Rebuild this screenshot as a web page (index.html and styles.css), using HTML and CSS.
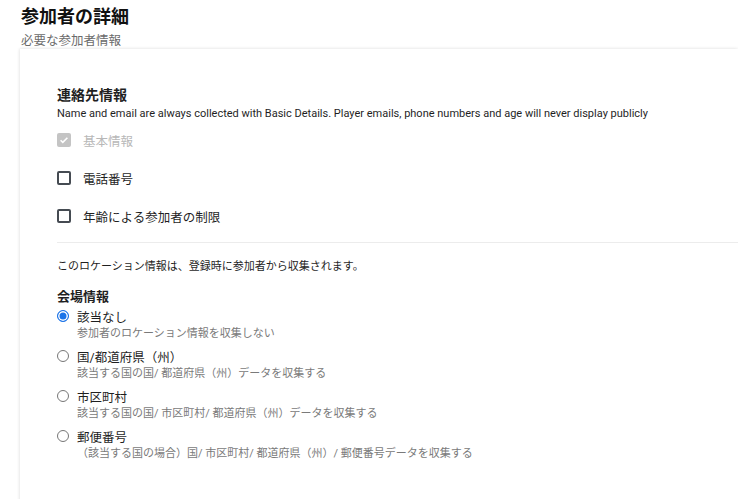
FILE: index.html
```html
<!DOCTYPE html>
<html lang="ja">
  <head>
    <meta charset="UTF-8" />
    <meta name="viewport" content="width=device-width, initial-scale=1.0" />
    <title>参加者の詳細</title>
    <link rel="stylesheet" href="styles.css">
  </head>
  <body>
    <div class="page-header">
      <h1 class="page-title">参加者の詳細</h1>
      <p class="page-subtitle">必要な参加者情報</p>
    </div>

    <div class="card">
      <section class="contact-section">
        <h2 class="section-title">連絡先情報</h2>
        <p class="section-desc">Name and email are always collected with Basic Details. Player emails, phone numbers and age will never display publicly</p>

        <div class="check-list">
          <label class="check-row disabled">
            <input type="checkbox" checked disabled />
            <span>基本情報</span>
          </label>
          <label class="check-row">
            <input type="checkbox" />
            <span>電話番号</span>
          </label>
          <label class="check-row">
            <input type="checkbox" />
            <span>年齢による参加者の制限</span>
          </label>
        </div>
      </section>

      <hr class="divider" />

      <section class="location-section">
        <p class="location-note">このロケーション情報は、登録時に参加者から収集されます。</p>
        <h3 class="group-title">会場情報</h3>

        <div class="radio-list">
          <div class="radio-option">
            <label class="radio-row">
              <input type="radio" name="venue" checked />
              <span>該当なし</span>
            </label>
            <div class="radio-hint">参加者のロケーション情報を収集しない</div>
          </div>
          <div class="radio-option">
            <label class="radio-row">
              <input type="radio" name="venue" />
              <span>国/都道府県（州）</span>
            </label>
            <div class="radio-hint">該当する国の国/ 都道府県（州）データを収集する</div>
          </div>
          <div class="radio-option">
            <label class="radio-row">
              <input type="radio" name="venue" />
              <span>市区町村</span>
            </label>
            <div class="radio-hint">該当する国の国/ 市区町村/ 都道府県（州）データを収集する</div>
          </div>
          <div class="radio-option">
            <label class="radio-row">
              <input type="radio" name="venue" />
              <span>郵便番号</span>
            </label>
            <div class="radio-hint">（該当する国の場合）国/ 市区町村/ 都道府県（州）/ 郵便番号データを収集する</div>
          </div>
        </div>
      </section>
    </div>
  </body>
</html>
```

FILE: styles.css
```css
:root {
  --text-primary: #1f1f1f;
  --text-secondary: #6b6b6b;
  --text-hint: #7a7a7a;
  --text-disabled: #b8b8b8;
  --accent-color: #1a73e8;
  --border-color: #ececec;
}

* {
  box-sizing: border-box;
  margin: 0;
  padding: 0;
}

body {
  font-family: Roboto, "Noto Sans CJK JP", sans-serif;
  color: var(--text-primary);
  background-color: #fff;
  overflow: hidden;
}

.page-header {
  padding: 6px 0 0 21px;
}

.page-title {
  font-size: 18px;
  line-height: 22px;
  font-weight: bold;
  color: #111;
}

.page-subtitle {
  margin-top: 4px;
  font-size: 12.5px;
  line-height: 17px;
  color: var(--text-secondary);
}

/* card runs off the right edge of the window in the design */
.card {
  margin-left: 20px;
  min-height: 460px;
  padding: 36px 0 0 37px;
  background-color: #fff;
  box-shadow: -1px 0 3px rgba(0, 0, 0, 0.07), 0 -1px 3px rgba(0, 0, 0, 0.05);
}

.section-title {
  font-size: 14px;
  line-height: 20px;
  font-weight: bold;
}

.section-desc {
  margin-top: 1px;
  font-size: 11px;
  line-height: 16px;
}

.check-list {
  margin-top: 8px;
  display: flex;
  flex-direction: column;
  gap: 18px;
}

.check-row {
  display: flex;
  align-items: center;
  gap: 12px;
  height: 20px;
  font-size: 12.5px;
}

.check-row input {
  appearance: none;
  width: 14px;
  height: 14px;
  border: 2px solid #454b52;
  border-radius: 2px;
  background-color: #fff;
}

.check-row.disabled {
  color: var(--text-disabled);
}

.check-row input:checked {
  border-color: #c4c4c4;
  background-color: #c4c4c4;
  background-image: url("data:image/svg+xml,%3Csvg xmlns='http://www.w3.org/2000/svg' viewBox='0 0 10 10'%3E%3Cpath d='M1.6 5.2l2.2 2.2 4.6-4.6' fill='none' stroke='white' stroke-width='1.6'/%3E%3C/svg%3E");
  background-size: 100% 100%;
}

.divider {
  margin-top: 16px;
  border: none;
  border-top: 1px solid var(--border-color);
}

.location-note {
  margin-top: 16px;
  font-size: 11px;
  line-height: 16px;
}

.group-title {
  margin-top: 13px;
  font-size: 13px;
  line-height: 18px;
  font-weight: bold;
}

.radio-list {
  margin-top: 1px;
  display: flex;
  flex-direction: column;
  gap: 5px;
}

.radio-row {
  display: flex;
  align-items: center;
  gap: 8px;
  height: 18px;
  font-size: 12.5px;
}

.radio-row input {
  appearance: none;
  width: 12px;
  height: 12px;
  border: 1px solid #767676;
  border-radius: 50%;
  background-color: #fff;
}

.radio-row input:checked {
  border: 1.5px solid var(--accent-color);
  box-shadow: inset 0 0 0 1.5px #fff;
  background-color: var(--accent-color);
}

.radio-hint {
  margin-top: 1px;
  padding-left: 20px;
  font-size: 11px;
  line-height: 16px;
  color: var(--text-hint);
}
```
